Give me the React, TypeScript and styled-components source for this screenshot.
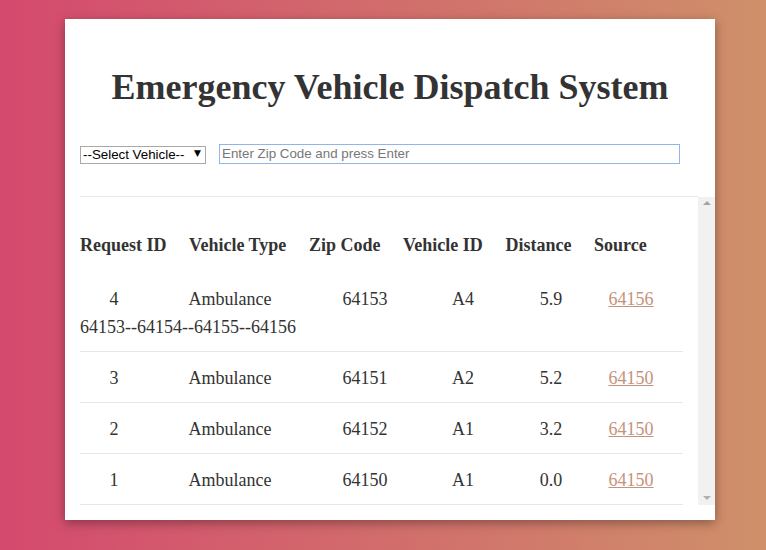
import React from "react";
import styled, { createGlobalStyle } from "styled-components";

const GlobalStyle = createGlobalStyle`
  html, body { margin: 0; padding: 0; }
  body {
    width: 766px;
    height: 550px;
    overflow: hidden;
    background: linear-gradient(to right, #d4496e 0%, #cf906a 100%);
    font-family: "Liberation Serif", "Times New Roman", serif;
    color: #333;
  }
`;

const Page = styled.div`
  padding: 19px 0 0 65px;
`;

const Card = styled.div`
  width: 650px;
  height: 501px;
  box-sizing: border-box;
  background: #fff;
  padding: 15px 0 15px 15px;
  box-shadow: 0 3px 10px rgba(0, 0, 0, 0.35);
  display: flex;
  flex-direction: column;
`;

const Title = styled.h1`
  margin: 32px 15px 0 0;
  font-size: 36px;
  line-height: 42px;
  font-weight: bold;
  text-align: center;
  color: #333;
`;

const Controls = styled.div`
  margin-top: 36px;
  display: flex;
  align-items: center;
  gap: 13px;
  height: 20px;
`;

const SelectWrap = styled.div`
  position: relative;
  &::after {
    content: "▼";
    position: absolute;
    right: 5px;
    top: 3px;
    font-size: 9px;
    font-family: "DejaVu Sans", sans-serif;
    color: #000;
    pointer-events: none;
  }
`;

const Select = styled.select`
  appearance: none;
  -webkit-appearance: none;
  width: 126px;
  height: 18px;
  box-sizing: border-box;
  border: 1px solid #a9a9a9;
  border-radius: 0;
  background: #fff;
  font-family: "Liberation Sans", Arial, sans-serif;
  font-size: 13.33px;
  color: #000;
  padding: 0 0 0 2px;
  line-height: 16px;
  outline: none;
`;

const ZipInput = styled.input`
  width: 461px;
  height: 20px;
  box-sizing: border-box;
  border: 1px solid #92b4ea;
  padding: 0 2px 1px;
  font-family: "Liberation Sans", Arial, sans-serif;
  font-size: 13.33px;
  outline: none;
  &::placeholder {
    color: #777;
  }
`;

const Scroller = styled.div`
  margin-top: 32px;
  flex: 1;
  display: flex;
  min-height: 0;
`;

const TableArea = styled.div`
  flex: 1;
  border-top: 1px solid #e8e8e8;
  padding-right: 15px;
  overflow: hidden;
`;

const Rail = styled.div`
  width: 17px;
  margin-top: 1px;
  background: #f1f1f1;
  display: flex;
  flex-direction: column;
  justify-content: space-between;
  align-items: center;
  padding: 4px 0 5px;
  box-sizing: border-box;
`;

const Arrow = styled.span<{ $down?: boolean }>`
  width: 0;
  height: 0;
  border-left: 4px solid transparent;
  border-right: 4px solid transparent;
  ${(p) =>
    p.$down
      ? "border-top: 4px solid #b0b0b0;"
      : "border-bottom: 4px solid #a3a3a3;"}
`;

const HeaderRow = styled.div`
  display: flex;
  gap: 22.6px;
  padding: 34px 0 14px;
  font-weight: bold;
  font-size: 18px;
  line-height: 28px;
`;

const Row = styled.div`
  display: grid;
  grid-template-columns: 68px 164px 106px 90px 86px 74px;
  padding: 12px 0 10px;
  border-bottom: 1px solid #e6e6e6;
  font-size: 18px;
  line-height: 28px;
`;

const Cell = styled.div`
  text-align: center;
  white-space: nowrap;
`;

const Route = styled.div`
  grid-column: 1 / -1;
  text-align: left;
`;

const SourceLink = styled.a`
  color: #c4937c;
  text-decoration: underline;
`;

type Req = {
  id: number;
  type: string;
  zip: string;
  vehicle: string;
  distance: string;
  source: string;
  route?: string;
};

const requests: Req[] = [
  { id: 4, type: "Ambulance", zip: "64153", vehicle: "A4", distance: "5.9", source: "64156", route: "64153--64154--64155--64156" },
  { id: 3, type: "Ambulance", zip: "64151", vehicle: "A2", distance: "5.2", source: "64150" },
  { id: 2, type: "Ambulance", zip: "64152", vehicle: "A1", distance: "3.2", source: "64150" },
  { id: 1, type: "Ambulance", zip: "64150", vehicle: "A1", distance: "0.0", source: "64150" },
];

export default function App() {
  return (
    <>
      <GlobalStyle />
      <Page>
        <Card>
          <Title>Emergency Vehicle Dispatch System</Title>
          <Controls>
            <SelectWrap>
              <Select defaultValue="">
                <option value="">--Select Vehicle--</option>
                <option value="ambulance">Ambulance</option>
                <option value="fire">Fire Truck</option>
                <option value="police">Police</option>
              </Select>
            </SelectWrap>
            <ZipInput placeholder="Enter Zip Code and press Enter" />
          </Controls>
          <Scroller>
            <TableArea>
              <HeaderRow>
                <span>Request ID</span>
                <span>Vehicle Type</span>
                <span>Zip Code</span>
                <span>Vehicle ID</span>
                <span>Distance</span>
                <span>Source</span>
              </HeaderRow>
              {requests.map((r) => (
                <Row key={r.id}>
                  <Cell>{r.id}</Cell>
                  <Cell>{r.type}</Cell>
                  <Cell>{r.zip}</Cell>
                  <Cell>{r.vehicle}</Cell>
                  <Cell>{r.distance}</Cell>
                  <Cell>
                    <SourceLink href="#">{r.source}</SourceLink>
                  </Cell>
                  {r.route && <Route>{r.route}</Route>}
                </Row>
              ))}
            </TableArea>
            <Rail>
              <Arrow />
              <Arrow $down />
            </Rail>
          </Scroller>
        </Card>
      </Page>
    </>
  );
}
